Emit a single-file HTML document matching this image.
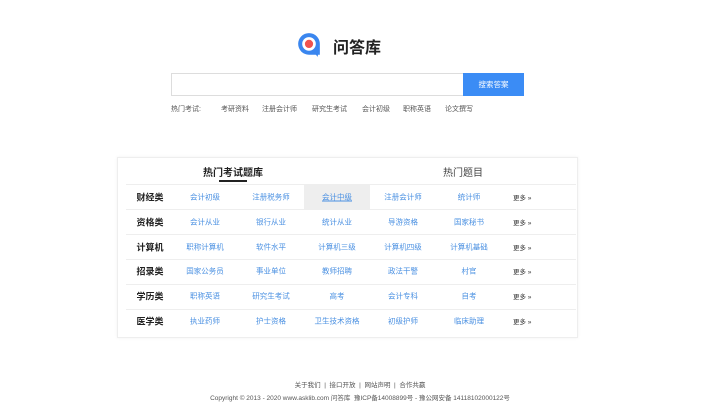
<!DOCTYPE html>
<html><head><meta charset="utf-8"><style>
*{margin:0;padding:0;box-sizing:border-box}
body{width:720px;height:405px;background:#fff;font-family:"Liberation Sans","Noto Sans CJK SC",sans-serif;position:relative;overflow:hidden;color:#333}
.abs{position:absolute}
.logo{left:297px;top:32px}
.lt{left:333px;top:34px;font-size:16px;font-weight:bold;color:#222;letter-spacing:0px}
.search{left:171px;top:73px;width:292px;height:23px;border:1px solid #ddd;border-right:none}
.btn{left:463px;top:73px;width:61px;height:23px;background:#3b8cf5;color:#fff;font-size:7.5px;text-align:center;line-height:23px}
.hot{top:104px;font-size:7px;color:#555;white-space:nowrap}
.panel{left:117px;top:157px;width:461px;height:181px;border:1px solid #eee;box-shadow:0 0 3px rgba(0,0,0,.06)}
.tab{top:164px;font-size:10px;transform:translateX(-50%);white-space:nowrap}
.line{left:219px;top:180px;width:28px;height:2px;background:#222}
.row{left:126px;width:450px;height:25px;border-top:1px solid #eee}
.lab{font-size:9px;font-weight:bold;color:#222;transform:translate(-50%,-50%);white-space:nowrap}
.lk{font-size:7.5px;color:#4a90e2;transform:translate(-50%,-50%);white-space:nowrap}
.more{font-size:6.5px;color:#333;transform:translateY(-50%);white-space:nowrap}
.hl{left:304px;top:185px;width:66px;height:24px;background:#eee}
.ft{font-size:6.5px;color:#555;white-space:nowrap;transform:translateX(-50%);left:360px}
</style></head><body>
<svg class="abs logo" width="24" height="26" viewBox="0 0 22 24"><path d="M11 1a10 10 0 1 0 0 20h10v-10A10 10 0 0 0 11 1z" fill="#3a86ef"/><path d="M14 17l5 6 1-8z" fill="#3a86ef"/><circle cx="11" cy="11" r="6.3" fill="#fff"/><circle cx="11" cy="11" r="3.8" fill="#ef5350"/></svg>
<div class="abs lt">问答库</div>
<div class="abs search"></div>
<div class="abs btn">搜索答案</div>
<div class="abs hot" style="left:171px">热门考试:</div>
<div class="abs hot" style="left:221px">考研资料</div>
<div class="abs hot" style="left:262px">注册会计师</div>
<div class="abs hot" style="left:312px">研究生考试</div>
<div class="abs hot" style="left:362px">会计初级</div>
<div class="abs hot" style="left:403px">职称英语</div>
<div class="abs hot" style="left:445px">论文撰写</div>
<div class="abs panel"></div>
<div class="abs tab" style="left:233px;font-weight:bold;color:#222">热门考试题库</div>
<div class="abs tab" style="left:463px;color:#444">热门题目</div>
<div class="abs line"></div>
<div class="abs hl"></div>
<div class="abs row" style="top:184px"></div>
<div class="abs row" style="top:209px"></div>
<div class="abs row" style="top:234px"></div>
<div class="abs row" style="top:259px"></div>
<div class="abs row" style="top:284px"></div>
<div class="abs row" style="top:309px"></div>
<div id="rows"></div>
<script>
var d=[["财经类","会计初级","注册税务师","会计中级","注册会计师","统计师"],["资格类","会计从业","银行从业","统计从业","导游资格","国家秘书"],["计算机","职称计算机","软件水平","计算机三级","计算机四级","计算机基础"],["招录类","国家公务员","事业单位","教师招聘","政法干警","村官"],["学历类","职称英语","研究生考试","高考","会计专科","自考"],["医学类","执业药师","护士资格","卫生技术资格","初级护师","临床助理"]];
var xs=[150,205,271,337,403,469],h="";
d.forEach(function(r,i){var y=197+i*24.8;r.forEach(function(t,j){h+='<div class="abs '+(j?'lk':'lab')+'" style="left:'+xs[j]+'px;top:'+y+'px'+(i==0&&j==3?';text-decoration:underline':'')+'">'+t+'</div>'});h+='<div class="abs more" style="left:513px;top:'+y+'px">更多 »</div>'});
document.getElementById('rows').innerHTML=h;
</script>
<div class="abs ft" style="top:379px">关于我们 &nbsp;|&nbsp; 接口开放 &nbsp;|&nbsp; 网站声明 &nbsp;|&nbsp; 合作共赢</div>
<div class="abs ft" style="top:392px">Copyright © 2013 - 2020 www.asklib.com 问答库 &nbsp;豫ICP备14008899号 - 豫公网安备 14118102000122号</div>
</body></html>
